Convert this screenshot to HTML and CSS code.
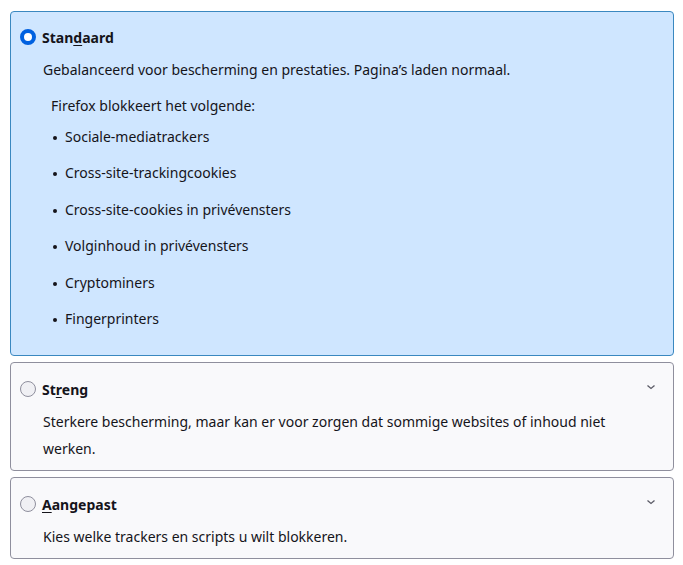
FILE: index.html
```html
<!DOCTYPE html>
<html lang="nl">
<head>
  <meta charset="UTF-8">
  <title>Verbeterde bescherming tegen volgen</title>
  <meta name="viewport" content="width=device-width, initial-scale=1.0">
  <link rel="stylesheet" href="styles.css">
</head>
<body>

<div class="options">

  <div class="option selected">
    <div class="option-header">
      <span class="radio checked"></span>
      <span class="label">Stan<u>d</u>aard</span>
    </div>
    <p class="desc">Gebalanceerd voor bescherming en prestaties. Pagina’s laden normaal.</p>
    <div class="blocked">
      <p class="blocked-title">Firefox blokkeert het volgende:</p>
      <ul>
        <li>Sociale-mediatrackers</li>
        <li>Cross-site-trackingcookies</li>
        <li>Cross-site-cookies in privévensters</li>
        <li>Volginhoud in privévensters</li>
        <li>Cryptominers</li>
        <li>Fingerprinters</li>
      </ul>
    </div>
  </div>

  <div class="option">
    <div class="option-header">
      <span class="radio"></span>
      <span class="label">St<u>r</u>eng</span>
      <svg class="chevron" width="12" height="12" viewBox="0 0 12 12"><path d="M2.5 4.5 L6 7.5 L9.5 4.5" fill="none" stroke="#5b5b66" stroke-width="1.3"/></svg>
    </div>
    <p class="desc">Sterkere bescherming, maar kan er voor zorgen dat sommige websites of inhoud niet werken.</p>
  </div>

  <div class="option">
    <div class="option-header">
      <span class="radio"></span>
      <span class="label"><u>A</u>angepast</span>
      <svg class="chevron" width="12" height="12" viewBox="0 0 12 12"><path d="M2.5 4.5 L6 7.5 L9.5 4.5" fill="none" stroke="#5b5b66" stroke-width="1.3"/></svg>
    </div>
    <p class="desc">Kies welke trackers en scripts u wilt blokkeren.</p>
  </div>

</div>

</body>
</html>
```

FILE: styles.css
```css
body {
  font-family: 'Noto Sans', 'Open Sans', sans-serif;
  font-size: 14px;
  margin: 0;
  background: #fff;
  color: #15141a;
}
.options {
  padding: 11px 9px 0 10px;
  display: flex;
  flex-direction: column;
  gap: 6px;
}
.option {
  border: 1px solid #8f8f9d;
  border-radius: 4px;
  background: #f9f9fb;
  padding: 15px 16px 8px 9px;
}
.option.selected {
  background: #cfe6ff;
  border-color: #3a88c0;
  padding-top: 14px;
  padding-bottom: 27px;
}
.option-header {
  display: flex;
  align-items: center;
  gap: 6px;
  height: 22px;
}
.radio {
  width: 14px;
  height: 14px;
  border: 1px solid #8f8f9d;
  border-radius: 50%;
  background: #f0f0f4;
  flex: none;
}
.radio.checked {
  width: 8px;
  height: 8px;
  border: 4px solid #0061e0;
  background: #fff;
}
.label {
  font-weight: bold;
}
.label u {
  text-decoration-thickness: 1px;
  text-underline-offset: 2px;
}
.chevron {
  margin-left: auto;
  margin-top: -4px;
}
.desc {
  margin: 8px 0 0 23px;
  line-height: 27px;
}
.blocked {
  margin: 14px 0 0 31px;
}
.blocked-title {
  margin: 0;
  line-height: 18px;
}
.blocked ul {
  margin: 0;
  padding: 0;
  list-style: none;
}
.blocked li {
  position: relative;
  padding-left: 14px;
  margin-top: 18px;
  line-height: 18.4px;
}
.blocked li:first-child {
  margin-top: 13px;
}
.blocked li::before {
  content: "";
  position: absolute;
  left: 2px;
  top: 8px;
  width: 4px;
  height: 4px;
  border-radius: 50%;
  background: #15141a;
}
```
